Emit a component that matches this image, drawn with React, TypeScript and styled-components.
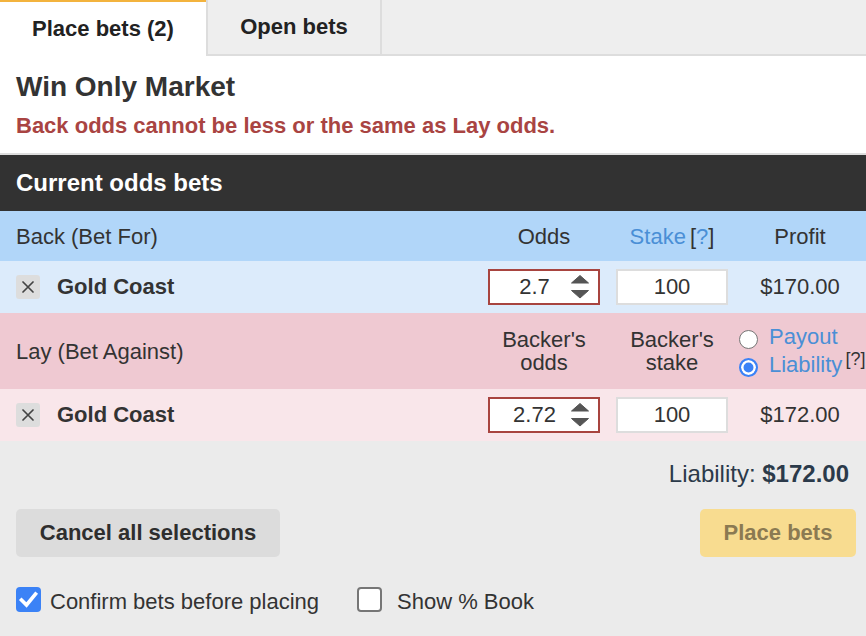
import React from "react";
import styled, { createGlobalStyle } from "styled-components";

const GlobalStyle = createGlobalStyle`
  html, body { margin: 0; padding: 0; background: #ebebeb; }
  body { font-family: "Liberation Sans", Arial, Helvetica, sans-serif; color: #333; }
  * { box-sizing: border-box; }
`;

const Slip = styled.div`
  width: 866px;
  height: 636px;
  overflow: hidden;
  display: flex;
  flex-direction: column;
  background: #ebebeb;
`;

const TabBar = styled.div`
  display: flex;
  height: 56px;
  background: #eeeeee;
`;

const Tab = styled.div<{ $active?: boolean }>`
  width: ${(p) => (p.$active ? "206px" : "176px")};
  display: flex;
  align-items: center;
  justify-content: center;
  font-size: 22px;
  font-weight: 700;
  color: #222;
  background: ${(p) => (p.$active ? "#ffffff" : "#eeeeee")};
  border-top: ${(p) => (p.$active ? "2px solid #f3b33d" : "none")};
  border-left: ${(p) => (p.$active ? "none" : "2px solid #dddddd")};
  border-right: ${(p) => (p.$active ? "none" : "2px solid #dddddd")};
  border-bottom: ${(p) => (p.$active ? "none" : "2px solid #dddddd")};
`;

const TabFiller = styled.div`
  flex: 1;
  border-bottom: 2px solid #dddddd;
`;

const MarketInfo = styled.div`
  background: #ffffff;
  padding: 15px 16px 14px;
  border-bottom: 2px solid #dddddd;
`;

const MarketTitle = styled.h2`
  margin: 0;
  font-size: 28px;
  line-height: 32px;
  font-weight: 700;
  color: #333;
`;

const ErrorText = styled.p`
  margin: 10px 0 0;
  font-size: 22px;
  line-height: 26px;
  font-weight: 700;
  color: #a94442;
`;

const SectionHeader = styled.div`
  height: 56px;
  background: #323232;
  color: #ffffff;
  font-size: 24px;
  font-weight: 700;
  display: flex;
  align-items: center;
  padding: 0 16px;
`;

type Variant = "backHead" | "back" | "layHead" | "lay";

const rowBg: Record<Variant, string> = {
  backHead: "#b1d6f9",
  back: "#dcebfb",
  layHead: "#efc9d2",
  lay: "#f9e6ea",
};

const rowHeight: Record<Variant, number> = {
  backHead: 50,
  back: 52,
  layHead: 76,
  lay: 52,
};

const BetRow = styled.div<{ $variant: Variant }>`
  display: grid;
  grid-template-columns: 1fr 128px 128px 128px;
  align-items: center;
  height: ${(p) => rowHeight[p.$variant]}px;
  background: ${(p) => rowBg[p.$variant]};
  padding: 0 2px 0 16px;
  font-size: 22px;
  color: #333;
`;

const HeadCell = styled.div<{ $center?: boolean }>`
  text-align: ${(p) => (p.$center ? "center" : "left")};
  line-height: 23px;
`;

const LinkText = styled.span`
  color: #4a8fd6;
`;

const Help = styled.span`
  margin-left: 4px;
  color: #333;
`;

const SupHelp = styled.span`
  font-size: 18px;
  line-height: 0;
  color: #333;
  margin-left: 3px;
  vertical-align: 7px;
  white-space: nowrap;
`;

const Selection = styled.div`
  display: flex;
  align-items: center;
  gap: 17px;
`;

const RemoveButton = styled.button`
  width: 24px;
  height: 24px;
  padding: 0;
  border: none;
  border-radius: 3px;
  background: #dddddd;
  display: flex;
  align-items: center;
  justify-content: center;
`;

const RunnerName = styled.span`
  font-weight: 700;
  font-size: 22px;
  color: #333;
`;

const InputCell = styled.div`
  display: flex;
  justify-content: center;
`;

const OddsBox = styled.div`
  width: 112px;
  height: 36px;
  border: 2px solid #a8443f;
  background: #ffffff;
  display: flex;
  align-items: center;
`;

const OddsInput = styled.input`
  flex: 1;
  min-width: 0;
  border: none;
  outline: none;
  background: transparent;
  font-family: inherit;
  font-size: 22px;
  color: #333;
  text-align: center;
  padding: 0 0 0 8px;
`;

const Spinner = styled.svg`
  flex: none;
  margin-right: 9px;
`;

const StakeInput = styled.input`
  width: 112px;
  height: 36px;
  border: 2px solid #dddddd;
  background: #ffffff;
  outline: none;
  font-family: inherit;
  font-size: 22px;
  color: #333;
  text-align: center;
  padding: 0;
`;

const ProfitCell = styled.div`
  text-align: center;
`;

const RadioList = styled.div`
  display: flex;
  flex-direction: column;
  gap: 2px;
  padding-left: 3px;
  white-space: nowrap;
`;

const RadioLabel = styled.label`
  display: flex;
  align-items: center;
  gap: 11px;
  height: 26px;
  color: #4a8fd6;
  font-size: 22px;
`;

const Radio = styled.input.attrs({ type: "radio" })`
  appearance: none;
  -webkit-appearance: none;
  margin: 4px 0 0;
  width: 19px;
  height: 19px;
  border-radius: 50%;
  border: 1.5px solid #767676;
  background: #ffffff;
  flex: none;
  &:checked {
    border: 2px solid #3b82f6;
    background: #3b82f6;
    box-shadow: inset 0 0 0 2.5px #ffffff;
  }
`;

const Footer = styled.div`
  flex: 1;
  padding: 19px 10px 0 16px;
`;

const LiabilityLine = styled.div`
  text-align: right;
  font-size: 24px;
  line-height: 28px;
  color: #2b3a4a;
  padding-right: 7px;
  strong {
    font-weight: 700;
  }
`;

const Actions = styled.div`
  margin-top: 21px;
  display: flex;
  justify-content: space-between;
`;

const ActionButton = styled.button<{ $primary?: boolean }>`
  height: 48px;
  width: ${(p) => (p.$primary ? "156px" : "264px")};
  border: none;
  border-radius: 5px;
  font-family: inherit;
  font-size: 22px;
  font-weight: 700;
  background: ${(p) => (p.$primary ? "#f8dc90" : "#dcdcdc")};
  color: ${(p) => (p.$primary ? "#8b7a52" : "#2e2e2e")};
  padding: 0;
`;

const Options = styled.div`
  margin-top: 26px;
  display: flex;
  align-items: center;
`;

const OptionLabel = styled.label<{ $gap: number; $offset?: number }>`
  display: flex;
  align-items: center;
  gap: ${(p) => p.$gap}px;
  margin-left: ${(p) => p.$offset ?? 0}px;
  font-size: 22px;
  color: #333;
`;

const OptionText = styled.span`
  margin-top: 6px;
`;

const CheckBox = styled.span<{ $checked?: boolean }>`
  width: 25px;
  height: 25px;
  border-radius: 4px;
  flex: none;
  display: flex;
  align-items: center;
  justify-content: center;
  background: ${(p) => (p.$checked ? "#3b82f6" : "#ffffff")};
  border: ${(p) => (p.$checked ? "none" : "2px solid #767676")};
`;

const CloseIcon = () => (
  <svg width="12" height="12" viewBox="0 0 12 12">
    <path d="M1 1 L11 11 M11 1 L1 11" stroke="#444" strokeWidth="1.7" strokeLinecap="round" />
  </svg>
);

const SpinIcon = () => (
  <Spinner width="18" height="24" viewBox="0 0 18 24">
    <path d="M9 0.5 L17.5 8 L0.5 8 Z" fill="#555" strokeLinejoin="round" stroke="#555" strokeWidth="1" />
    <path d="M0.5 15.5 L17.5 15.5 L9 23 Z" fill="#555" strokeLinejoin="round" stroke="#555" strokeWidth="1" />
  </Spinner>
);

const CheckIcon = () => (
  <svg width="25" height="25" viewBox="0 0 25 25">
    <path d="M5.5 13 L10.5 18 L19.5 7" fill="none" stroke="#fff" strokeWidth="3.6" strokeLinecap="square" />
  </svg>
);

type Bet = { runner: string; odds: string; stake: string; result: string };

const SelectionRow = ({ variant, bet }: { variant: Variant; bet: Bet }) => (
  <BetRow $variant={variant}>
    <Selection>
      <RemoveButton aria-label="Remove">
        <CloseIcon />
      </RemoveButton>
      <RunnerName>{bet.runner}</RunnerName>
    </Selection>
    <InputCell>
      <OddsBox>
        <OddsInput defaultValue={bet.odds} />
        <SpinIcon />
      </OddsBox>
    </InputCell>
    <InputCell>
      <StakeInput defaultValue={bet.stake} />
    </InputCell>
    <ProfitCell>{bet.result}</ProfitCell>
  </BetRow>
);

export default function App() {
  return (
    <>
      <GlobalStyle />
      <Slip>
        <TabBar>
          <Tab $active>Place bets (2)</Tab>
          <Tab>Open bets</Tab>
          <TabFiller />
        </TabBar>
        <MarketInfo>
          <MarketTitle>Win Only Market</MarketTitle>
          <ErrorText>Back odds cannot be less or the same as Lay odds.</ErrorText>
        </MarketInfo>
        <SectionHeader>Current odds bets</SectionHeader>

        <BetRow $variant="backHead">
          <HeadCell>Back (Bet For)</HeadCell>
          <HeadCell $center>Odds</HeadCell>
          <HeadCell $center>
            <LinkText>Stake</LinkText>
            <Help>
              [<LinkText>?</LinkText>]
            </Help>
          </HeadCell>
          <HeadCell $center>Profit</HeadCell>
        </BetRow>
        <SelectionRow
          variant="back"
          bet={{ runner: "Gold Coast", odds: "2.7", stake: "100", result: "$170.00" }}
        />

        <BetRow $variant="layHead">
          <HeadCell>Lay (Bet Against)</HeadCell>
          <HeadCell $center>
            Backer's
            <br />
            odds
          </HeadCell>
          <HeadCell $center>
            Backer's
            <br />
            stake
          </HeadCell>
          <RadioList>
            <RadioLabel>
              <Radio name="layMode" />
              <span>Payout</span>
            </RadioLabel>
            <RadioLabel>
              <Radio name="layMode" defaultChecked />
              <span>
                Liability
                <SupHelp>[?]</SupHelp>
              </span>
            </RadioLabel>
          </RadioList>
        </BetRow>
        <SelectionRow
          variant="lay"
          bet={{ runner: "Gold Coast", odds: "2.72", stake: "100", result: "$172.00" }}
        />

        <Footer>
          <LiabilityLine>
            Liability: <strong>$172.00</strong>
          </LiabilityLine>
          <Actions>
            <ActionButton>Cancel all selections</ActionButton>
            <ActionButton $primary>Place bets</ActionButton>
          </Actions>
          <Options>
            <OptionLabel $gap={9}>
              <CheckBox $checked>
                <CheckIcon />
              </CheckBox>
              <OptionText>Confirm bets before placing</OptionText>
            </OptionLabel>
            <OptionLabel $gap={15} $offset={38}>
              <CheckBox />
              <OptionText>Show % Book</OptionText>
            </OptionLabel>
          </Options>
        </Footer>
      </Slip>
    </>
  );
}
